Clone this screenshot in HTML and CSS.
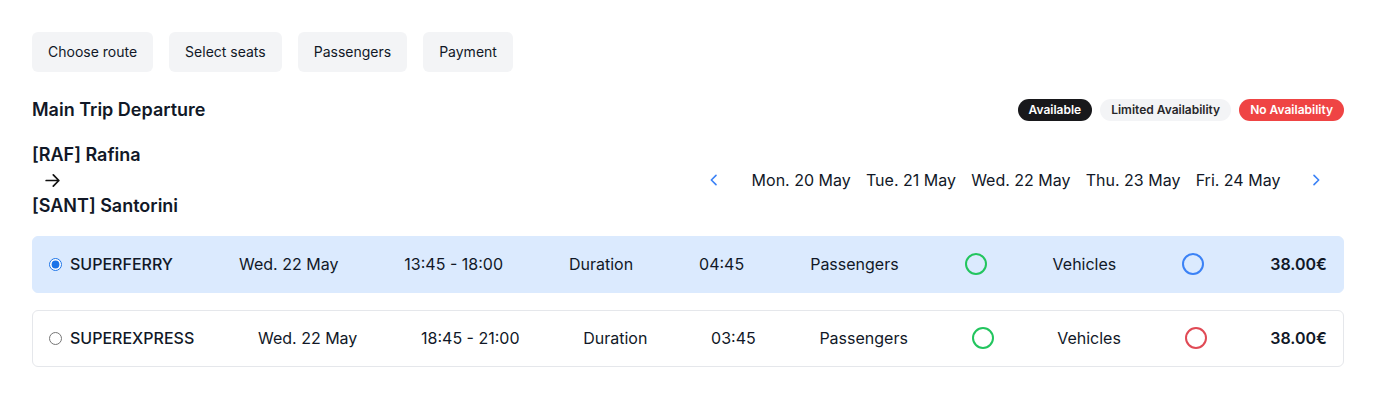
FILE: index.html
```html
<!DOCTYPE html>
<html lang="en">
<head>
<meta charset="utf-8">
<title>Trip selection</title>
<link rel="stylesheet" href="styles.css">
</head>
<body>
<div class="page">
  <nav class="steps">
    <button class="step">Choose route</button>
    <button class="step">Select seats</button>
    <button class="step">Passengers</button>
    <button class="step">Payment</button>
  </nav>

  <div class="title-row">
    <h2 class="title">Main Trip Departure</h2>
    <div class="legend">
      <span class="badge badge-dark">Available</span>
      <span class="badge badge-light">Limited Availability</span>
      <span class="badge badge-red">No Availability</span>
    </div>
  </div>

  <div class="route-row">
    <div class="route">
      <div>[RAF] Rafina</div>
      <div class="arrow">
        <svg width="19" height="19" viewBox="0 0 24 24" fill="none" stroke="#111" stroke-width="2.2" stroke-linecap="round" stroke-linejoin="round"><path d="M4 12h16M13 5l7 7-7 7"/></svg>
      </div>
      <div>[SANT] Santorini</div>
    </div>
    <div class="dates">
      <button class="chev">
        <svg width="16" height="16" viewBox="0 0 24 24" fill="none" stroke="#3b82f6" stroke-width="2.4" stroke-linecap="round" stroke-linejoin="round"><path d="M15 5l-7 7 7 7"/></svg>
      </button>
      <div class="date-list">
        <span class="date">Mon. 20 May</span>
        <span class="date">Tue. 21 May</span>
        <span class="date">Wed. 22 May</span>
        <span class="date">Thu. 23 May</span>
        <span class="date">Fri. 24 May</span>
      </div>
      <button class="chev">
        <svg width="16" height="16" viewBox="0 0 24 24" fill="none" stroke="#3b82f6" stroke-width="2.4" stroke-linecap="round" stroke-linejoin="round"><path d="M9 5l7 7-7 7"/></svg>
      </button>
    </div>
  </div>

  <div class="trips">
    <label class="trip trip-selected">
      <span class="name"><input type="radio" name="trip" checked> SUPERFERRY</span>
      <span>Wed. 22 May</span>
      <span>13:45 - 18:00</span>
      <span>Duration</span>
      <span>04:45</span>
      <span>Passengers</span>
      <span class="dot dot-green"></span>
      <span>Vehicles</span>
      <span class="dot dot-blue"></span>
      <span class="price">38.00€</span>
    </label>
    <label class="trip">
      <span class="name"><input type="radio" name="trip"> SUPEREXPRESS</span>
      <span>Wed. 22 May</span>
      <span>18:45 - 21:00</span>
      <span>Duration</span>
      <span>03:45</span>
      <span>Passengers</span>
      <span class="dot dot-green"></span>
      <span>Vehicles</span>
      <span class="dot dot-red"></span>
      <span class="price">38.00€</span>
    </label>
  </div>
</div>
</body>
</html>
```

FILE: styles.css
```css
* { box-sizing: border-box; }
html, body { margin: 0; background: #fff; }
body {
  font-family: Inter, "Noto Sans", "Liberation Sans", sans-serif;
  color: #111827;
}
.page { padding: 32px 32px; }

.steps { display: flex; gap: 16px; }
.step {
  font: inherit;
  font-size: 14px;
  line-height: 24px;
  padding: 8px 16px;
  border: 0;
  border-radius: 6px;
  background: #f3f4f6;
  color: #111827;
}

.title-row {
  display: flex;
  justify-content: space-between;
  align-items: center;
  margin-top: 24px;
}
.title {
  margin: 0;
  font-size: 18px;
  font-weight: 600;
  line-height: 28px;
}
.legend { display: flex; gap: 8px; }
.badge {
  font-size: 12px;
  font-weight: 600;
  line-height: 16px;
  padding: 3px 11px;
  border-radius: 999px;
}
.badge-dark { background: #18181b; color: #fff; }
.badge-light { background: #f3f4f6; color: #27272a; }
.badge-red { background: #ef4444; color: #fff; }

.route-row {
  display: flex;
  justify-content: space-between;
  align-items: center;
  margin-top: 18px;
}
.route {
  font-size: 18px;
  font-weight: 600;
  line-height: 25.5px;
}
.arrow { padding-left: 11px; height: 25.5px; display: flex; align-items: center; }
.dates {
  display: flex;
  align-items: center;
  padding-right: 20px;
}
.chev {
  border: 0;
  background: none;
  padding: 0;
  width: 16px;
  height: 24px;
  display: flex;
  align-items: center;
  justify-content: center;
}
.date-list { display: flex; margin: 0 20px 0 22px; }
.date {
  font-size: 16px;
  line-height: 24px;
  padding: 0 7.6px;
}

.trips {
  display: flex;
  flex-direction: column;
  gap: 17px;
  margin-top: 17px;
}
.trip {
  display: flex;
  justify-content: space-between;
  align-items: center;
  padding: 16px 16px;
  border: 1px solid #e5e7eb;
  border-radius: 6px;
  font-size: 16px;
  line-height: 24px;
  height: 57px;
}
.trip-selected { background: #dbeafe; border-color: #dbeafe; }
.name { display: flex; align-items: center; gap: 8px; font-weight: 500; }
.name input { margin: 0; width: 13px; height: 13px; accent-color: #1a73e8; }
.dot {
  width: 22px;
  height: 22px;
  border-radius: 50%;
  border: 2px solid;
}
.dot-green { border-color: #22c55e; }
.dot-blue { border-color: #3b82f6; }
.dot-red { border-color: #e04a55; }
.price { font-weight: 600; }
```
